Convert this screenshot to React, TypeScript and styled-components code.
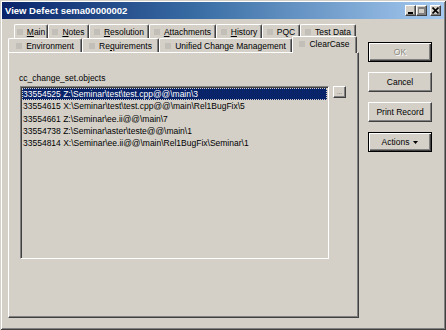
import React from 'react';
import styled, { createGlobalStyle } from 'styled-components';

const Global = createGlobalStyle`
  html, body { margin: 0; padding: 0; background: #d4d0c8; }
  body { font-family: "Liberation Sans", Arial, sans-serif; color: #000; }
  * { box-sizing: border-box; }
`;

const Window = styled.div`
  width: 446px;
  height: 330px;
  background: #d4d0c8;
  padding: 2px 2px 0 2px;
  display: flex;
  flex-direction: column;
  box-shadow: inset 1px 1px #d4d0c8, inset -1px -1px #404040, inset 2px 2px #fff, inset -2px -2px #808080;
`;

const TitleBar = styled.div`
  height: 17px;
  display: flex;
  align-items: center;
  padding: 0 3px 0 3px;
  background: linear-gradient(to right, #0a246a 0%, #3a6ea5 45%, #a6caf0 100%);
`;

const Title = styled.div`
  color: #fff;
  font-weight: bold;
  font-size: 9.5px;
  letter-spacing: 0;
  white-space: nowrap;
`;

const Controls = styled.div`
  margin-left: auto;
  display: flex;
  align-items: center;
`;

const CaptionButton = styled.div<{ $gap?: number }>`
  width: 11px;
  height: 11px;
  margin-left: ${p => p.$gap ?? 0}px;
  background: #d4d0c8;
  border-style: solid;
  border-width: 1px;
  border-color: #fff #404040 #404040 #fff;
  box-shadow: inset -1px -1px #808080;
  display: flex;
  align-items: center;
  justify-content: center;
`;

const Body = styled.div`
  flex: 1;
  display: flex;
  padding: 5px 0 0 6px;
`;

const LeftCol = styled.div`
  width: 351px;
  display: flex;
  flex-direction: column;
`;

const TabRow = styled.div<{ $indent: number }>`
  height: 14px;
  display: flex;
  align-items: flex-start;
  padding-left: ${p => p.$indent}px;
`;

const Tab = styled.div<{ $w: number; $active?: boolean }>`
  width: ${p => p.$w}px;
  height: ${p => (p.$active ? 17 : 14)}px;
  margin-top: ${p => (p.$active ? -2 : 0)}px;
  padding-bottom: ${p => (p.$active ? 3 : 0)}px;
  display: flex;
  align-items: center;
  justify-content: center;
  gap: 4px;
  font-size: 8.5px;
  white-space: nowrap;
  background: #d4d0c8;
  border-top: 1px solid #fff;
  border-left: 1px solid #fff;
  border-right: 1px solid #404040;
  border-radius: 2px 2px 0 0;
  box-shadow: inset -1px 0 #808080;
  position: relative;
  z-index: ${p => (p.$active ? 2 : 1)};
`;

const TabIcon = styled.span`
  width: 6px;
  height: 6px;
  flex: none;
  background: #c2bfb8;
`;

const Panel = styled.div`
  height: 266px;
  display: flex;
  flex-direction: column;
  padding: 19px 0 0 11px;
  border-style: solid;
  border-width: 1px;
  border-color: #fff #404040 #404040 #fff;
  box-shadow: inset -1px -1px #808080;
`;

const FieldLabel = styled.div`
  font-size: 8.5px;
  line-height: 12px;
  height: 12px;
  margin: 0 0 2px -1px;
`;

const ListArea = styled.div`
  display: flex;
  align-items: flex-start;
  gap: 4px;
`;

const ListBox = styled.div`
  width: 309px;
  height: 173px;
  border-style: solid;
  border-width: 1px;
  border-color: #808080 #fff #fff #808080;
  box-shadow: inset 1px 1px #404040, inset -1px -1px #d4d0c8;
  padding: 1px;
  overflow: hidden;
`;

const ListItem = styled.div<{ $selected?: boolean }>`
  height: 12.25px;
  line-height: 12px;
  font-size: 8.5px;
  white-space: nowrap;
  padding-left: 1px;
  color: ${p => (p.$selected ? '#fff' : '#000')};
  background: ${p => (p.$selected ? '#0a246a' : 'transparent')};
  outline: ${p => (p.$selected ? '1px dotted #d4d0c8' : 'none')};
  outline-offset: -1px;
`;

const SmallButton = styled.div`
  width: 13px;
  height: 12px;
  background: #d4d0c8;
  border-style: solid;
  border-width: 1px;
  border-color: #fff #404040 #404040 #fff;
  box-shadow: inset -1px -1px #808080;
  font-size: 6px;
  line-height: 6px;
  display: flex;
  align-items: flex-end;
  justify-content: center;
  padding-bottom: 2px;
  color: #404040;
`;

const RightCol = styled.div`
  margin-left: 9px;
  padding-top: 18px;
  display: flex;
  flex-direction: column;
  gap: 10px;
`;

const Button = styled.div<{ $framed?: boolean; $disabled?: boolean }>`
  width: 64px;
  height: 20px;
  display: flex;
  align-items: center;
  justify-content: center;
  gap: 4px;
  font-size: 8.5px;
  background: #d4d0c8;
  color: ${p => (p.$disabled ? '#8a8780' : '#000')};
  text-shadow: ${p => (p.$disabled ? '1px 1px #fff' : 'none')};
  border: 1px solid;
  border-color: ${p => (p.$framed ? '#000' : '#fff #404040 #404040 #fff')};
  box-shadow: ${p =>
    p.$framed
      ? 'inset 1px 1px #fff, inset -1px -1px #404040, inset -2px -2px #808080'
      : 'inset -1px -1px #808080'};
`;

const rows1 = [
  { w: 34, label: <><u>M</u>ain</> },
  { w: 41, label: <><u>N</u>otes</> },
  { w: 60, label: <><u>R</u>esolution</> },
  { w: 67, label: <><u>A</u>ttachments</> },
  { w: 46, label: <><u>H</u>istory</> },
  { w: 38, label: <>PQC</> },
  { w: 56, label: <>Test Data</> },
];

const rows2 = [
  { w: 74, label: <>Environment</> },
  { w: 77, label: <>Re<u>q</u>uirements</> },
  { w: 133, label: <>Unified Change Management</> },
  { w: 65, label: <>ClearCase</>, active: true },
];

const items = [
  '33554525 Z:\\Seminar\\test\\test.cpp@@\\main\\3',
  '33554615 X:\\Seminar\\test\\test.cpp@@\\main\\Rel1BugFix\\5',
  '33554661 Z:\\Seminar\\ee.ii@@\\main\\7',
  '33554738 Z:\\Seminar\\aster\\teste@@\\main\\1',
  '33554814 X:\\Seminar\\ee.ii@@\\main\\Rel1BugFix\\Seminar\\1',
];

export default function App() {
  return (
    <>
      <Global />
      <Window>
        <TitleBar>
          <Title>View Defect sema00000002</Title>
          <Controls>
            <CaptionButton>
              <svg width="7" height="7" viewBox="0 0 7 7">
                <rect x="1" y="5" width="5" height="2" fill="#000" />
              </svg>
            </CaptionButton>
            <CaptionButton>
              <svg width="7" height="7" viewBox="0 0 7 7">
                <rect x="0.5" y="0.5" width="6" height="6" fill="none" stroke="#808080" />
                <rect x="0" y="0" width="7" height="2" fill="#808080" />
              </svg>
            </CaptionButton>
            <CaptionButton $gap={3}>
              <svg width="7" height="7" viewBox="0 0 7 7">
                <path d="M0.5 0.5 L6.5 6.5 M6.5 0.5 L0.5 6.5" stroke="#000" strokeWidth="1.6" />
              </svg>
            </CaptionButton>
          </Controls>
        </TitleBar>
        <Body>
          <LeftCol>
            <TabRow $indent={6}>
              {rows1.map((t, i) => (
                <Tab key={i} $w={t.w}>
                  <TabIcon />
                  <span>{t.label}</span>
                </Tab>
              ))}
            </TabRow>
            <TabRow $indent={0}>
              {rows2.map((t, i) => (
                <Tab key={i} $w={t.w} $active={t.active}>
                  <TabIcon />
                  <span>{t.label}</span>
                </Tab>
              ))}
            </TabRow>
            <Panel>
              <FieldLabel>cc_change_set.objects</FieldLabel>
              <ListArea>
                <ListBox>
                  {items.map((it, i) => (
                    <ListItem key={i} $selected={i === 0}>
                      {it}
                    </ListItem>
                  ))}
                </ListBox>
                <SmallButton>...</SmallButton>
              </ListArea>
            </Panel>
          </LeftCol>
          <RightCol>
            <Button $framed $disabled>OK</Button>
            <Button>Cancel</Button>
            <Button>Print Record</Button>
            <Button $framed>
              Actions
              <svg width="5" height="3" viewBox="0 0 5 3">
                <path d="M0 0 H5 L2.5 3 Z" fill="#000" />
              </svg>
            </Button>
          </RightCol>
        </Body>
      </Window>
    </>
  );
}
